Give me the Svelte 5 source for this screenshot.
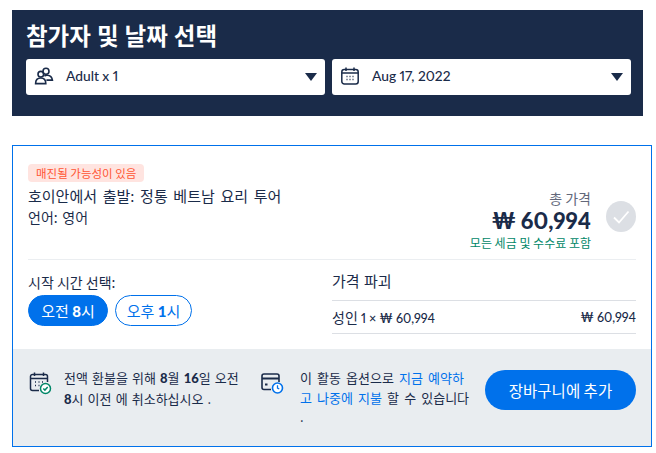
<script lang="ts">
    let selects = [
        { label: "Adult x 1", icon: "people" },
        { label: "Aug 17, 2022", icon: "calendar" }
    ]
    let times = [
        { label: "오전 ", hour: "8", active: true },
        { label: "오후 ", hour: "1", active: false }
    ]
</script>

<div class="page">
    <header class="picker">
        <h1>참가자 및 날짜 선택</h1>
        <div class="selects">
            {#each selects as select}
                <div class="select">
                    {#if select.icon == "people"}
                        <svg width="20" height="20" viewBox="0 0 20 20" fill="none" stroke="#1a2b49" stroke-width="1.6">
                            <circle cx="12" cy="5.2" r="3" />
                            <circle cx="6.8" cy="8.2" r="2.8" />
                            <path d="M1.6 17.6c0-3.4 2-5.6 5.2-5.6s5 2.2 5 5.6z" />
                            <path d="M10.4 10.2c.8-.7 1.8-1 3-.9 2.7.2 4.600 2 5 4.800h-6" />
                        </svg>
                    {:else}
                        <svg width="20" height="20" viewBox="0 0 20 20" fill="none" stroke="#1a2b49" stroke-width="1.5">
                            <rect x="1.800" y="3.400" width="16.400" height="14.600" rx="2.500" />
                            <path d="M1.800 7h16.400M6 1.500v3.400M14 1.500v3.400" />
                            <path d="M6.500 10.500h1M9.500 10.500h1M12.500 10.500h1M6.500 13.500h1M9.500 13.500h1M12.500 13.500h1" />
                        </svg>
                    {/if}
                    <span class="value">{select.label}</span>
                    <span class="caret"></span>
                </div>
            {/each}
        </div>
    </header>

    <section class="card">
        <div class="top">
            <div class="info">
                <span class="badge">매진될 가능성이 있음</span>
                <p class="name">호이안에서 출발: 정통 베트남 요리 투어</p>
                <p class="lang">언어: 영어</p>
            </div>
            <div class="total">
                <div class="amounts">
                    <span class="total-label">총 가격</span>
                    <strong class="price">₩ 60,994</strong>
                    <span class="fees">모든 세금 및 수수료 포함</span>
                </div>
                <span class="check">
                    <svg width="30" height="30" viewBox="0 0 30 30" fill="none" stroke="#fff" stroke-width="1.800">
                        <path d="M8 15.500l5 5 9.500-11" />
                    </svg>
                </span>
            </div>
        </div>

        <div class="details">
            <div class="times">
                <p class="times-label">시작 시간 선택:</p>
                <div class="pills">
                    {#each times as time}
                        <button class="pill" class:active={time.active}>{time.label}<b>{time.hour}</b>시</button>
                    {/each}
                </div>
            </div>
            <div class="breakdown">
                <p class="breakdown-title">가격 파괴</p>
                <div class="line">
                    <span><span class="ko">성인</span> 1 × ₩ 60,994</span>
                    <span>₩ 60,994</span>
                </div>
            </div>
        </div>

        <footer class="bottom">
            <div class="note first">
                <svg width="24" height="24" viewBox="0 0 24 24" fill="none" stroke="#1a2b49" stroke-width="1.500">
                    <path d="M11 19.500H4.500a2 2 0 0 1-2-2V5.500a2 2 0 0 1 2-2h13a2 2 0 0 1 2 2V11" />
                    <path d="M2.500 7.500h17M6.500 1.500v3.500M15.500 1.500v3.500" />
                    <path d="M7 11h1M10.500 11h1M14 11h1M7 14.500h1M10.500 14.500h1" />
                    <circle cx="17.500" cy="17.500" r="5" fill="#fff" stroke="#008768" />
                    <path d="M15.300 17.500l1.600 1.600 2.800-3" stroke="#008768" />
                </svg>
                <p>전액 환불을 위해 <b>8</b>월 <b>16</b>일 오전 <b>8</b>시 이전 에 취소하십시오 .</p>
            </div>
            <div class="note second">
                <svg width="24" height="24" viewBox="0 0 24 24" fill="none" stroke="#1a2b49" stroke-width="1.600">
                    <path d="M11 18.500H4a2 2 0 0 1-2-2V5a2 2 0 0 1 2-2h13a2 2 0 0 1 2 2v6" />
                    <path d="M2 7.500h17" stroke-width="2" />
                    <path d="M5 13.500h2.500" stroke-width="2" />
                    <circle cx="17.500" cy="17" r="5" fill="#fff" stroke="#0071eb" />
                    <path d="M17.500 14.300V17l1.800 1" stroke="#0071eb" stroke-width="1.300" />
                </svg>
                <p>이 활동 옵션으로 <span class="link">지금 예약하고 나중에 지불</span> 할 수 있습니다 .</p>
            </div>
            <button class="add">장바구니에 추가</button>
        </footer>
    </section>
</div>

<style>
    :global(body) {
        margin: 0;
        background: #fff;
    }
    .page {
        width: 656px;
        height: 453px;
        box-sizing: border-box;
        padding: 10px 4px 0 12px;
        font-family: "Noto Sans CJK KR", "Lato", sans-serif;
        color: #1a2b49;
        overflow: hidden;
        word-spacing: 1.5px;
    }
    p, h1 {
        margin: 0;
    }
    .picker {
        width: 631px;
        height: 106px;
        box-sizing: border-box;
        background: #1a2b49;
        padding: 10px 12px 0 14px;
    }
    h1 {
        color: #fff;
        font-size: 23.500px;
        font-weight: 700;
        line-height: 30px;
        margin-bottom: 9px;
        word-spacing: 0.7px;
    }
    .selects {
        display: flex;
        gap: 7px;
    }
    .select {
        flex: 1;
        height: 36px;
        display: flex;
        align-items: center;
        background: #fff;
        border-radius: 3px;
        padding: 0 8px 0 8px;
    }
    .select svg {
        margin-top: -3px;
    }
    .value {
        font-family: "Lato", sans-serif;
        font-size: 13.750px;
        font-weight: 500;
        font-variant-numeric: proportional-nums;
        word-spacing: 0;
        margin-left: 12px;
        margin-top: -4px;
        flex: 1;
    }
    .caret {
        border-left: 6.500px solid transparent;
        border-right: 6.500px solid transparent;
        border-top: 8px solid #1a2b49;
    }
    .card {
        width: 640px;
        height: 302px;
        box-sizing: border-box;
        margin-top: 29px;
        border: 1px solid #0071eb;
        display: flex;
        flex-direction: column;
    }
    .top {
        display: flex;
        justify-content: space-between;
        margin: 0 15px;
        height: 114px;
        box-sizing: border-box;
        padding-top: 18px;
        border-bottom: 1px solid #ebeef1;
    }
    .badge {
        display: block;
        width: fit-content;
        background: #ffe4e0;
        color: #ff5533;
        font-size: 11.500px;
        line-height: 18px;
        height: 18px;
        padding: 0 8px;
        border-radius: 4px;
        word-spacing: 0;
    }
    .name {
        font-size: 15px;
        line-height: 22px;
        margin-top: 3px;
        word-spacing: 2.300px;
    }
    .lang {
        font-size: 14px;
        line-height: 22px;
        margin-top: -1px;
    }
    .total {
        display: flex;
        align-items: flex-start;
        gap: 15px;
        padding-top: 25px;
    }
    .amounts {
        display: flex;
        flex-direction: column;
        align-items: flex-end;
    }
    .total-label {
        font-size: 14px;
        line-height: 18px;
        color: #63687a;
        word-spacing: 0;
    }
    .price {
        font-family: "Lato", "Noto Sans CJK KR", sans-serif;
        font-size: 22px;
        font-weight: 900;
        line-height: 28px;
        font-variant-numeric: proportional-nums;
        word-spacing: 0;
    }
    .fees {
        font-size: 12px;
        line-height: 15px;
        color: #008768;
        word-spacing: 0;
    }
    .check {
        width: 30px;
        height: 31px;
        margin-top: 12px;
        border-radius: 50%;
        background: #dcdfe4;
        display: flex;
        align-items: center;
        justify-content: center;
    }
    .details {
        display: flex;
        margin: 0 15px;
        height: 89px;
    }
    .times {
        width: 304px;
        padding-top: 12px;
    }
    .times-label {
        font-size: 14px;
        line-height: 20px;
        word-spacing: 0;
    }
    .pills {
        display: flex;
        gap: 7px;
        margin-top: 3px;
    }
    .pill {
        height: 31px;
        box-sizing: border-box;
        border: 1px solid #0071eb;
        border-radius: 16px;
        background: #fff;
        color: #0071eb;
        font-family: inherit;
        font-size: 15px;
        padding: 0;
        width: 77px;
        white-space: nowrap;
    }
    .pill.active {
        background: #0071eb;
        color: #fff;
        width: 80px;
    }
    .pill b {
        font-family: "Lato", sans-serif;
        font-weight: 900;
    }
    .breakdown {
        flex: 1;
    }
    .breakdown-title {
        font-size: 15px;
        line-height: 20px;
        padding: 11px 0 9px;
        border-bottom: 1px solid #dcdfe4;
        word-spacing: 1px;
    }
    .line {
        display: flex;
        justify-content: space-between;
        align-items: center;
        height: 32px;
        font-family: "Lato", "Noto Sans CJK KR", sans-serif;
        font-size: 12.500px;
        font-weight: 500;
        font-variant-numeric: proportional-nums;
        word-spacing: 0;
        border-bottom: 1px solid #dcdfe4;
    }
    .ko {
        font-family: "Noto Sans CJK KR", sans-serif;
        font-size: 14px;
        font-weight: 400;
    }
    .bottom {
        flex: 1;
        background: #e9edf0;
        display: flex;
        align-items: flex-start;
        padding: 21px 15px 0 15px;
    }
    .note {
        display: flex;
        font-size: 13px;
        line-height: 19.500px;
    }
    .note svg {
        flex: none;
        margin-top: 1px;
    }
    .note p {
        margin-top: -2px;
    }
    .note b {
        font-family: "Lato", sans-serif;
        font-weight: 900;
    }
    .note.first {
        width: 232px;
        gap: 12px;
        word-spacing: 1.200px;
    }
    .note.first p {
        width: 178px;
    }
    .note.second {
        width: 225px;
        gap: 16px;
        word-spacing: 2.200px;
    }
    .note.second p {
        width: 172px;
    }
    .link {
        color: #0071eb;
    }
    .add {
        width: 151px;
        height: 40px;
        border: none;
        border-radius: 20px;
        background: #0071eb;
        color: #fff;
        font-family: inherit;
        font-size: 15.500px;
        word-spacing: 0;
        padding: 0;
    }
</style>
